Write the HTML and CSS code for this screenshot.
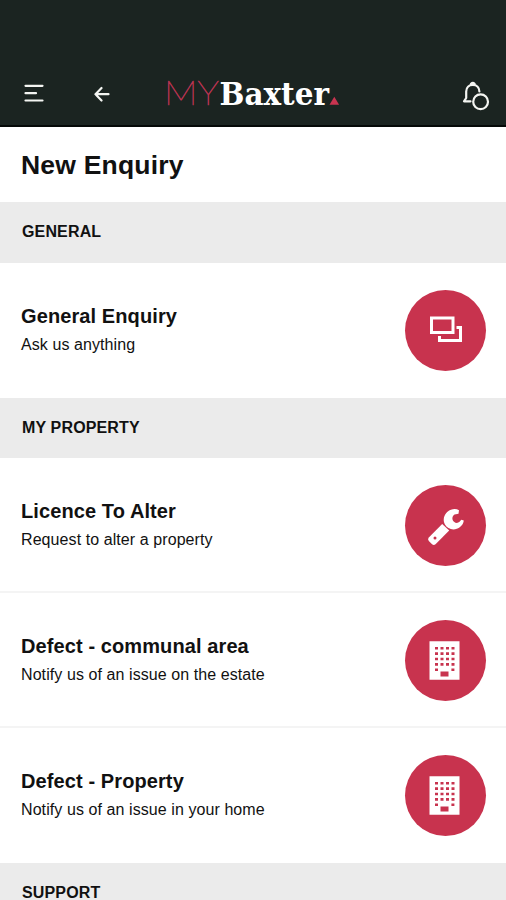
FILE: index.html
```html
<!DOCTYPE html>
<html lang="en">
<head>
<meta charset="utf-8">
<title>New Enquiry</title>
<link rel="stylesheet" href="styles.css">
</head>
<body>
<svg class="defs" width="0" height="0" aria-hidden="true">
  <symbol id="building" viewBox="0 0 81 81">
    <path class="fill" d="M24.500 21.300h30v38.500h-30z"/>
    <path class="windows" d="M30 28.300h20M30 33.600h20M30 39h20M30 44.400h20M30 49.700h3M46.400 49.700h3"/>
    <path class="door" d="M35.500 51.500h8v5h-8z"/>
  </symbol>
</svg>
<header class="topbar">
  <button class="btn" aria-label="Menu"><svg width="20" height="20" viewBox="0 0 20 20"><path class="line" d="M1.500 1.800h17M1.500 9.200h10.500M1.500 16.500h17"/></svg></button>
  <button class="btn back" aria-label="Back"><svg width="16" height="16" viewBox="0 0 16 16"><path class="line" d="M14.500 8.200H1.500M7.500 2L1.500 8.200l6 6.300"/></svg></button>
  <svg class="logo" width="176" height="36" viewBox="0 0 176 36">
    <text class="logo-my" x="-4" y="29" textLength="55" lengthAdjust="spacingAndGlyphs">MY</text>
    <text class="logo-name" x="51.500" y="29" textLength="109.500" lengthAdjust="spacingAndGlyphs">Baxter</text>
    <path class="logo-mark" d="M161.500 28.800l4.800-8 4.800 8z"/>
  </svg>
  <button class="btn bell" aria-label="Notifications"><svg width="30" height="34" viewBox="0 0 30 34"><path class="line" d="M10.500 23.300H4l2.200-3.300v-6.500c0-4 2.700-6.700 6.600-6.700s6.600 2.700 6.600 6.700M11 5.800q1.800-1.600 3.600 0"/><circle class="line" cx="20.600" cy="23.800" r="7.400"/></svg></button>
</header>
<h1 class="title">New Enquiry</h1>
<main>
  <h2 class="section">GENERAL</h2>
  <article class="item">
    <div><h3>General Enquiry</h3><p>Ask us anything</p></div>
    <svg class="badge" viewBox="0 0 81 81"><path class="outline" d="M26.500 28h21.500v14.500H26.500zM51.500 37.500h4v13H34.500v-4.500"/></svg>
  </article>
  <h2 class="section">MY PROPERTY</h2>
  <article class="item ruled">
    <div><h3>Licence To Alter</h3><p>Request to alter a property</p></div>
    <svg class="badge" viewBox="0 0 81 81"><path class="fill" d="M54 25.300c-3-2-8-1.500-11.500 1.500-3.700 3.200-4.800 8.200-2.700 12.500 2.300 4.300 7.500 6.200 12 4.500 3.800-1.400 6.600-4.600 7-8.300l-2.500-.7-2 2.300c-1.700 1.200-3.800 1-5.300-.4-2.400-2.200-2-5.700.5-7.300l4-.6z"/><path class="fill" d="M37.200 39l7 6.600-13.700 13.600q-1.700 1.600-3.400 0l-3.300-3.200q-1.500-1.700 0-3.400z"/><circle class="hole" cx="30" cy="53" r="1.500"/></svg>
  </article>
  <article class="item ruled">
    <div><h3>Defect - communal area</h3><p>Notify us of an issue on the estate</p></div>
    <svg class="badge"><use href="#building"/></svg>
  </article>
  <article class="item last">
    <div><h3>Defect - Property</h3><p>Notify us of an issue in your home</p></div>
    <svg class="badge"><use href="#building"/></svg>
  </article>
  <h2 class="section">SUPPORT</h2>
</main>
</body>
</html>
```
FILE: styles.css
```css
* { box-sizing: border-box; }
body {
  margin: 0;
  height: 900px;
  overflow: hidden;
  background: #fff;
  color: #111;
  font-family: "Liberation Sans", Arial, sans-serif;
}
h1, h2, h3, p { margin: 0; }
.defs { display: block; }
.topbar {
  display: flex;
  align-items: center;
  height: 127px;
  padding: 62px 16px 0 24px;
  background: #1b2421;
  border-bottom: 2px solid #050908;
}
.btn {
  display: flex;
  padding: 0;
  border: 0;
  background: none;
}
.back { margin-left: 50px; }
.logo {
  margin-left: 58px;
  overflow: visible;
}
.bell { margin-left: auto; margin-top: 3px; }
.line {
  fill: none;
  stroke: #f4f5f2;
  stroke-width: 2.200;
  stroke-linecap: round;
  stroke-linejoin: round;
}
.logo-my {
  font: 100 33px Lato, sans-serif;
  fill: #b83351;
  stroke: #b83351;
  stroke-width: .7;
}
.logo-name {
  font: bold 32.500px "DejaVu Serif", serif;
  fill: #fff;
}
.logo-mark { fill: #c93450; }
.title {
  height: 75px;
  padding-left: 21px;
  font-size: 26.500px;
  line-height: 77px;
  letter-spacing: .2px;
}
.section {
  height: 61px;
  padding-left: 22px;
  background: #ebebeb;
  font-size: 16px;
  line-height: 59px;
  letter-spacing: .15px;
}
.section ~ .section { height: 60px; }
.item {
  display: flex;
  align-items: center;
  justify-content: space-between;
  height: 135px;
  padding: 0 20px 0 21px;
}
.ruled { box-shadow: inset 0 -2px #f4f4f4; }
.item h3 {
  font-size: 20px;
  line-height: 28px;
  letter-spacing: .1px;
}
.item p {
  font-size: 16px;
  line-height: 29px;
  letter-spacing: .08px;
}
.badge {
  width: 81px;
  height: 81px;
  border-radius: 50%;
  background: #c8334e;
}
.fill { fill: #fff; }
.hole, .door { fill: #c8334e; }
.outline {
  fill: none;
  stroke: #fff;
  stroke-width: 3;
}
.windows {
  fill: none;
  stroke: #c8334e;
  stroke-width: 2.600;
  stroke-dasharray: 3 2.500;
}
```
